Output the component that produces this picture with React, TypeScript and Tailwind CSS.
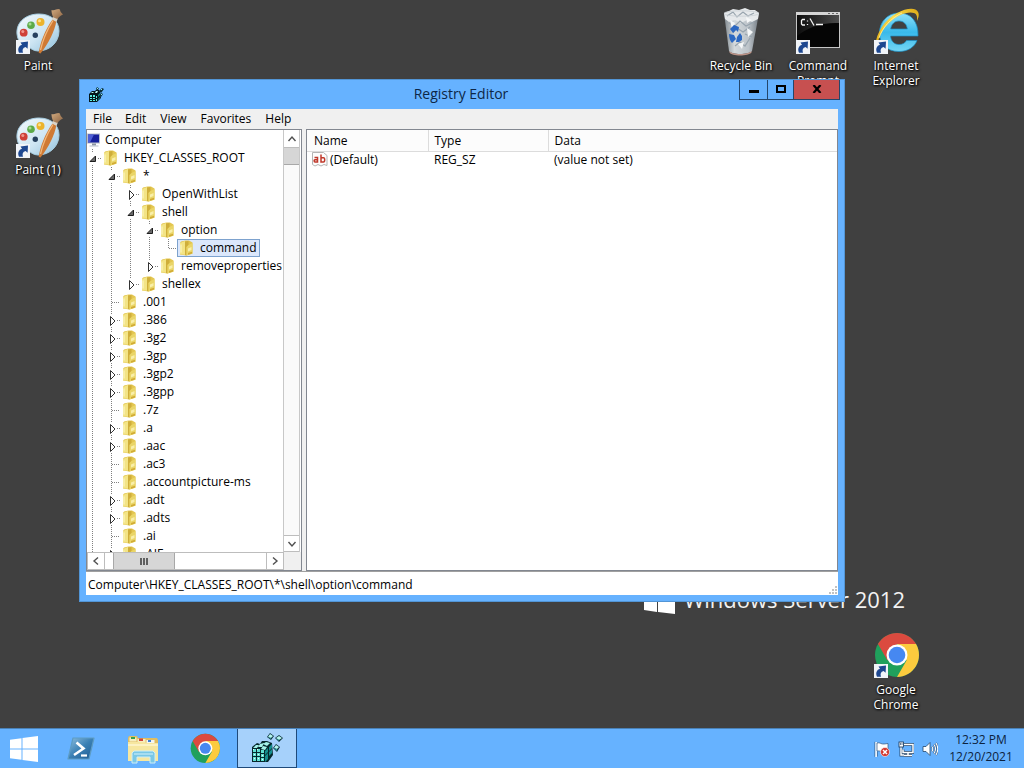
import type { ReactNode } from "react";

/* ---------- Desktop icons ---------- */

function ShortcutBadge() {
  return (
    <g>
      <rect x="2" y="32" width="14" height="14" fill="#f1f4f8" />
      <path d="M5 44.800c-1.800-4-.2-7 3-8L6.500 34.600l7.500-1-.4 7.200-2-1.700c-2.800.6-3.600 2.700-2.600 5.700z" fill="#1d4790" />
    </g>
  );
}

function PaintIcon() {
  return (
    <svg viewBox="0 0 48 48" className="size-12 overflow-visible" aria-hidden="true">
      <defs>
        <linearGradient id="palette" x1="0" y1="0" x2="1" y2="1">
          <stop offset="0" stopColor="#f2f9fd" />
          <stop offset="0.55" stopColor="#cfe6f3" />
          <stop offset="1" stopColor="#8fc0dc" />
        </linearGradient>
        <linearGradient id="bristle" x1="0" y1="0" x2="1" y2="1">
          <stop offset="0" stopColor="#d3ab80" />
          <stop offset="1" stopColor="#8a6241" />
        </linearGradient>
      </defs>
      <path d="M3 26C2 14 12 6 25 6c12 0 20 7 20 17 0 11-9 20-21 20-5 0-7-3-10-4C8 38 4 34 3 26z" fill="url(#palette)" stroke="#a5cce0" strokeWidth="1" />
      <circle cx="9.700" cy="24.700" r="3.900" fill="#cf4038" />
      <circle cx="8.800" cy="23.500" r="1.500" fill="#f0958d" />
      <circle cx="17" cy="17.300" r="3.800" fill="#5cab49" />
      <circle cx="16" cy="16" r="1.500" fill="#a7dc94" />
      <circle cx="26.500" cy="14" r="4" fill="#ecb32c" />
      <circle cx="25.500" cy="12.700" r="1.500" fill="#fbe291" />
      <circle cx="21.300" cy="27.300" r="2.700" fill="#26405e" />
      <path d="M38.500 11.500l3.800 1.800C41 22 35 35 26.500 45.500l-1.800-.8C26 35 31 22 38.500 11.500z" fill="#cf7a34" />
      <path d="M39 12.500C33 22 28.500 33 26.500 42" fill="none" stroke="#f3b87b" strokeWidth="1.300" />
      <path d="M37.500 11l2.500-3 4 2-1.500 4z" fill="#d9d3c8" />
      <path d="M39.500 9.500c-1.500-2.500-2-5-2-7.500 2 .8 3 0 4.500-.5s2.500-1 4 0c0 2 1.500 3.500 3 5-2 .8-4 2.500-5.500 4.500z" fill="url(#bristle)" />
      <ShortcutBadge />
    </svg>
  );
}

function RecycleBinIcon() {
  return (
    <svg viewBox="0 0 48 48" className="size-12 overflow-visible" aria-hidden="true">
      <defs>
        <linearGradient id="bin" x1="0" y1="0" x2="1" y2="0">
          <stop offset="0" stopColor="#7d868d" />
          <stop offset="0.3" stopColor="#d5dadd" />
          <stop offset="0.7" stopColor="#bcc3c9" />
          <stop offset="1" stopColor="#737b82" />
        </linearGradient>
      </defs>
      <path d="M7 5l5 38c2 4 20 4 23 0L42 5z" fill="url(#bin)" />
      <path d="M7 5l5-2 4-2 6 1 6-2 5 2 5 0 4 3-1 6-6 3-5-2-6 3-6-3-6 2-4-3z" fill="#e6e9eb" />
      <path d="M10 8l6-4 4 5 6-5 5 4 6-3M12 15l6 3 5-5 6 5 8-4M16 25l4-5 6 4 7-5M18 38l5-4 5 4 5-8M28 26l7 3" fill="none" stroke="#98a4ae" strokeWidth="1.200" />
      <path d="M13 12l5 3-3 6zM30 20l6 4-5 5zM21 36l6-2-2 7zM29 9l6 3-5 3z" fill="#f5f7f8" />
      <path d="M13 21l4-4 5 2-1 5-2-2-3 3zM12 26l5 1 2 4-4 4c-2-2-3-5-3-9zM19 34l1-5 3-4 2 3 0 4-3 2z" fill="#2c68c2" />
      <path d="M12.500 43c2 4 19 4 22 0v1.500c-3 4-20 4-22 0z" fill="#bf968a" />
      <ellipse cx="24.500" cy="5.500" rx="17.500" ry="2.700" fill="none" stroke="#cfd5d9" />
    </svg>
  );
}

function CommandPromptIcon() {
  return (
    <svg viewBox="0 0 48 48" className="size-12 overflow-visible" aria-hidden="true">
      <defs>
        <linearGradient id="console" x1="0" y1="0" x2="1" y2="0">
          <stop offset="0" stopColor="#0c0c0c" />
          <stop offset="1" stopColor="#4c4c4c" />
        </linearGradient>
      </defs>
      <rect x="2.500" y="4.500" width="43" height="35" fill="#050505" stroke="#c6c6c6" />
      <rect x="2" y="4" width="44" height="3" fill="#d5d5d5" />
      <path d="M34 5.500h2M38 5.500h2M42 5.500h2" stroke="#6a6a6a" />
      <path d="M3 7h42v8C28 14 12 20 3 28z" fill="url(#console)" />
      <path d="M11 11.500H8.500l-1 1v3.500l1 1H11M13.500 12.500v1M13.500 16v1M16 10.500l4 7M22 16.500h7" fill="none" stroke="#f4f4f4" strokeWidth="1.300" />
      <ShortcutBadge />
    </svg>
  );
}

function InternetExplorerIcon() {
  return (
    <svg viewBox="0 0 48 48" className="size-12 overflow-visible" aria-hidden="true">
      <defs>
        <linearGradient id="ie-e" x1="0" y1="0" x2="0" y2="1">
          <stop offset="0" stopColor="#8fe0f8" />
          <stop offset="0.5" stopColor="#39b9ea" />
          <stop offset="1" stopColor="#74d6f5" />
        </linearGradient>
        <linearGradient id="ie-ring" x1="0" y1="1" x2="1" y2="0">
          <stop offset="0" stopColor="#e1a90f" />
          <stop offset="0.6" stopColor="#fbdc4c" />
          <stop offset="1" stopColor="#dba713" />
        </linearGradient>
      </defs>
      <path d="M46 28H18.500c.5 5.500 4 8.500 8.500 8.500 3.500 0 6-1.500 7.500-4h10.500C42.500 39 36 43.500 27 43.500 15 43.500 7.500 36 7.500 25S15.500 5 27 5s19.500 8 19 23zM18.700 21h16.600c-.5-5-3.800-8-8.300-8s-7.600 3-8.300 8z" fill="url(#ie-e)" stroke="#1d8fc6" strokeWidth="0.700" />
      <path d="M3.500 37C4 26 12 12 25 5 35-.5 45-1 46.500 5c.6 2.500 0 5-1.500 8 .5-4 0-7-3-8C36 3 25 7 17 15 11 21 6 29 5.500 38z" fill="url(#ie-ring)" />
      <path d="M7 30C10 20 19 10 30 5" fill="none" stroke="#fff0a0" strokeWidth="0.900" />
      <ShortcutBadge />
    </svg>
  );
}

function ChromeMark({ badge = false, className }: { badge?: boolean; className: string }) {
  return (
    <svg viewBox={badge ? "0 0 48 48" : "2 0 48 48"} className={className} aria-hidden="true">
      <g transform="translate(25 23)">
        <circle r="22" fill="#20a05c" />
        <path d="M-19.050-11A22 22 0 0 1 19.050-11L0-11-9.530 5.500z" fill="#db4a3f" />
        <path d="M19.050-11A22 22 0 0 1 0 22L9.530 5.500 0-11z" fill="#fccb3e" />
        <circle r="10.500" fill="#fff" />
        <circle r="8.300" fill="#4688f1" />
      </g>
      {badge && <ShortcutBadge />}
    </svg>
  );
}

function DesktopItem({ place, icon, lines }: { place: string; icon: ReactNode; lines: string[] }) {
  return (
    <button type="button" className={`absolute flex w-[76px] flex-col items-center ${place}`}>
      {icon}
      <span className="mt-0.5 text-[12px] leading-[15px] whitespace-nowrap text-white [text-shadow:1px_1px_2px_#000,0_0_3px_#000]">
        {lines.map((line) => (
          <span key={line} className="block">
            {line}
          </span>
        ))}
      </span>
    </button>
  );
}

/* ---------- Shared glyphs ---------- */

function RegistryCubes({ className }: { className: string }) {
  return (
    <svg viewBox="0 0 32 32" className={className} aria-hidden="true">
      <path d="M1 15l5-4 3 1 2-3 5 0 5 2 1 12-5 7H1z" fill="#06282c" />
      <path d="M2 17h3v3H2zM6 17h3v3H6zM10 18h3v3h-3zM2 21h3v3H2zM6 21h3v3H6zM10 22h3v3h-3zM2 25h3v4H2zM6 25h3v4H6zM10 26h3v3h-3z" fill="#5fe0d2" />
      <path d="M2 17h1v1H2zM6 17h1v1H6zM3 22h1v1H3zM7 22h1v1H7zM3 26h1v1H3zM7 26h1v1H7zM11 23h1v1h-1zM11 27h1v1h-1z" fill="#e9fffb" />
      <path d="M2 16l3-3h3l-2 3zM7 15l2-3 4-1-2 4zM12 12l3-2 4 1-3 3zM10 17l2-3 4 1-2 3z" fill="#a5f3ea" />
      <path d="M14 19l3-3v4l-3 3zM18 15l3-3v4l-3 3zM14 24l3-3v4l-3 3zM18 20l3-3v4l-3 3zM14 28l3-3v2l-3 3z" fill="#158f8f" />
      <path d="M19 1l4 3-3 4-4-3zM28 3l4 3-4 4-4-4zM25 12l4 3-3 5-4-4z" fill="#0a2f3a" />
      <path d="M19 2l3 2-2 2-3-1zM28 4l3 2-3 2-3-2zM25 13l3 2-2 2-3-1z" fill="#b5f6f0" />
      <path d="M17 5l3 1v1zM25 6l3 2v1zM23 16l3 1v2z" fill="#27a6a8" />
    </svg>
  );
}

function SmallRegistryCubes() {
  return (
    <svg viewBox="0 0 16 16" className="ml-0.5 size-4" aria-hidden="true">
      <path d="M1 7l3-3h3l1-1h3l1 2 1 6-4 4H1z" fill="#04181c" />
      <path d="M2 8h2v2H2zM5 8h2v2H5zM2 11h2v1H2zM5 11h2v1H5zM2 13h2v1H2zM5 13h2v1H5zM8 9h1v2H8zM8 12h1v2H8z" fill="#5ff0e2" />
      <path d="M3 6l1-1h2L5 6zM7 6l1-2h2L9 6z" fill="#baf8f2" />
      <path d="M10 8l2-2v2l-2 2zM10 12l2-2v1l-2 2z" fill="#149090" />
      <path d="M9 0l2 1.500L9.500 4 8 2zM14 1l2 1-3 4-2-2zM13 6l2 1-2 3-1-2z" fill="#0a2f3a" />
      <path d="M9 1h1v1H9zM13 2h1v1h-1zM13 7h1v1h-1z" fill="#8ce9e4" />
    </svg>
  );
}

function FolderIcon() {
  return (
    <svg viewBox="0 0 16 16" className="size-4 shrink-0" aria-hidden="true">
      <path d="M2 3l1-1.500L7.500.5H11l3.500 2v11l-6 2-6.500-1z" fill="#e3c650" />
      <path d="M2 3L7 1v13.800l-5-.6z" fill="#f3e486" />
      <path d="M3 4.500v8" stroke="#fbf5c0" strokeWidth="1.200" />
      <path d="M7 1.500l3.500-.5v4l-2 2v8.500L7 15z" fill="#cfae3a" />
      <path d="M8.500 7l2-2 4-2v10.800l-6 1.700z" fill="#ead567" />
      <path d="M10 8.500L13.500 7v3L10 11.500z" fill="#f9efaa" />
      <path d="M10 13l4-1.200v1.700l-4 1.200z" fill="#d1ab36" />
    </svg>
  );
}

function ComputerIcon() {
  return (
    <svg viewBox="0 0 16 16" className="size-4 shrink-0" aria-hidden="true">
      <rect x="0" y="1.500" width="13" height="10" fill="#b9c0cc" />
      <rect x="1" y="2.500" width="11" height="8" fill="#17219c" />
      <path d="M1 2.500h6L3 10.500H1z" fill="#4e5ed6" />
      <path d="M5 11.500h4v2H5z" fill="#8c95a3" />
      <path d="M2.500 13.500h9v1h-9z" fill="#b5bcc8" />
    </svg>
  );
}

function Chevron({ d }: { d: string }) {
  return (
    <svg viewBox="0 0 10 10" className="size-2.5" aria-hidden="true">
      <path d={d} fill="none" stroke="#505050" strokeWidth="1.400" />
    </svg>
  );
}

/* ---------- Registry tree ---------- */

type Twist = "open" | "closed" | "none";
type Key = { name: string; twist: Twist; guides: boolean[]; last?: boolean; selected?: boolean };

const top: boolean[] = [true];

const keys: Key[] = [
  { name: "HKEY_CLASSES_ROOT", twist: "open", guides: [] },
  { name: "*", twist: "open", guides: top },
  { name: "OpenWithList", twist: "closed", guides: [true, true] },
  { name: "shell", twist: "open", guides: [true, true] },
  { name: "option", twist: "open", guides: [true, true, true] },
  { name: "command", twist: "none", guides: [true, true, true, true], last: true, selected: true },
  { name: "removeproperties", twist: "closed", guides: [true, true, true], last: true },
  { name: "shellex", twist: "closed", guides: [true, true], last: true },
  { name: ".001", twist: "none", guides: top },
  { name: ".386", twist: "closed", guides: top },
  { name: ".3g2", twist: "closed", guides: top },
  { name: ".3gp", twist: "closed", guides: top },
  { name: ".3gp2", twist: "closed", guides: top },
  { name: ".3gpp", twist: "closed", guides: top },
  { name: ".7z", twist: "none", guides: top },
  { name: ".a", twist: "closed", guides: top },
  { name: ".aac", twist: "closed", guides: top },
  { name: ".ac3", twist: "none", guides: top },
  { name: ".accountpicture-ms", twist: "none", guides: top },
  { name: ".adt", twist: "closed", guides: top },
  { name: ".adts", twist: "closed", guides: top },
  { name: ".ai", twist: "none", guides: top },
  { name: ".AIF", twist: "closed", guides: top },
];

function Guide({ visible }: { visible: boolean }) {
  return (
    <svg viewBox="0 0 19 18" className="h-[18px] w-[19px] shrink-0" shapeRendering="crispEdges" aria-hidden="true">
      {visible && <path d="M5.500 0v18" stroke="#808080" strokeDasharray="1 1" />}
    </svg>
  );
}

function Joint({ twist, last }: { twist: Twist; last?: boolean }) {
  return (
    <svg viewBox="0 0 14 18" className="h-[18px] w-[14px] shrink-0" aria-hidden="true">
      <g stroke="#808080" strokeDasharray="1 1" shapeRendering="crispEdges">
        {twist === "none" ? (
          <path d={last ? "M5.500 0v10" : "M5.500 0v18"} />
        ) : (
          <path d={last ? "M5.500 0v4" : "M5.500 0v4M5.500 16v2"} />
        )}
        <path d={twist === "none" ? "M6 9.500h8" : "M11 9.500h3"} />
      </g>
      {twist === "open" && <path d="M8.500 7v5.500H3z" fill="#6a6a6a" stroke="#1e1e1e" />}
      {twist === "closed" && <path d="M4.500 5.500v9L9 10z" fill="#fff" stroke="#333" />}
    </svg>
  );
}

function TreeRow({ item }: { item: Key }) {
  return (
    <li role="treeitem" aria-selected={item.selected ?? false} className="flex h-[18px]">
      {item.guides.map((visible, i) => (
        <Guide key={i} visible={visible} />
      ))}
      <Joint twist={item.twist} last={item.last} />
      <button
        type="button"
        className={`flex h-[18px] items-center gap-1.5 border pr-0.5 leading-4 whitespace-nowrap ${
          item.selected ? "border-[#7da2ce] bg-[#dbe7fb]" : "border-transparent"
        }`}
      >
        <FolderIcon />
        {item.name}
      </button>
    </li>
  );
}

function RegistryTree() {
  return (
    <section aria-label="Registry keys" className="flex w-[216px] shrink-0 flex-col border border-[#828790] bg-white">
      <div className="flex min-h-0 flex-1">
        <ul role="tree" className="min-w-0 flex-1 overflow-hidden pt-px">
          <li role="treeitem" aria-selected={false} className="flex h-[18px]">
            <button type="button" className="flex items-center gap-0.5 leading-4">
              <ComputerIcon />
              Computer
            </button>
          </li>
          {keys.map((item) => (
            <TreeRow key={item.name} item={item} />
          ))}
        </ul>
        <div className="mr-px flex w-[17px] shrink-0 flex-col border-x border-[#c8c8c8] bg-[#fafafa]">
          <button type="button" aria-label="Scroll up" className="flex h-[18px] items-center justify-center border-b border-[#bdbdbd] bg-white">
            <Chevron d="M1.500 7L5 3l3.500 4" />
          </button>
          <div className="h-[17px] border-b border-[#a8a8a8] bg-[#d6d6d6]" />
          <div className="flex-1" />
          <button type="button" aria-label="Scroll down" className="flex h-[17px] items-center justify-center border-y border-[#bdbdbd] bg-white">
            <Chevron d="M1.500 3L5 7l3.500-4" />
          </button>
        </div>
      </div>
      <div className="flex h-[18px] shrink-0 bg-[#f0f0f0]">
        <div className="flex flex-1 border border-[#bdbdbd] bg-white">
          <button type="button" aria-label="Scroll left" className="flex w-[17px] items-center justify-center border-r border-[#bdbdbd]">
            <Chevron d="M7 1.500L3 5l4 3.500" />
          </button>
          <div className="ml-2 flex w-[62px] items-center justify-center gap-px border-x border-[#a8a8a8] bg-[#d6d6d6]">
            <span className="h-[7px] w-0.5 bg-[#606060]" />
            <span className="h-[7px] w-0.5 bg-[#606060]" />
            <span className="h-[7px] w-0.5 bg-[#606060]" />
          </div>
          <div className="flex-1" />
          <button type="button" aria-label="Scroll right" className="flex w-[17px] items-center justify-center border-l border-[#bdbdbd]">
            <Chevron d="M3 1.500L7 5 3 8.500" />
          </button>
        </div>
        <div className="w-[17px]" />
      </div>
    </section>
  );
}

/* ---------- Value list ---------- */

function StringValueIcon() {
  return (
    <svg viewBox="0 0 16 16" className="size-4 shrink-0" aria-hidden="true">
      <path d="M.5.500h11l3.500 3v10l-3-1-3 1.500-3-1.500-3 1.500-2.500-1.500z" fill="#fdfdfd" stroke="#b4b4b4" />
      <path d="M2.500 5.500h3v4.500h-2.500c-1.200 0-1.200-2.300 0-2.300h2.500M9 2.500v7.500h2.500c1.600 0 1.600-4.300 0-4.300h-2.500" fill="none" stroke="#c0392b" strokeWidth="1.500" />
    </svg>
  );
}

function ValueList() {
  return (
    <section aria-label="Values" className="min-w-0 flex-1 border border-[#828790] bg-white">
      <table className="w-full table-fixed border-collapse text-left">
        <thead>
          <tr className="h-[21px] border-b border-[#dcdcdc] bg-[#fcfcfc]">
            <th className="w-[121px] border-r border-[#dcdcdc] pt-0.5 pl-[7px] font-normal">Name</th>
            <th className="w-[120px] border-r border-[#dcdcdc] pt-0.5 pl-[6px] font-normal">Type</th>
            <th className="pt-0.5 pl-[6px] font-normal">Data</th>
          </tr>
        </thead>
        <tbody>
          <tr className="h-[18px]">
            <td className="pl-[5px]">
              <span className="flex items-center gap-0.5">
                <StringValueIcon />
                (Default)
              </span>
            </td>
            <td className="pl-[6px]">REG_SZ</td>
            <td className="pl-[6px]">(value not set)</td>
          </tr>
        </tbody>
      </table>
    </section>
  );
}

/* ---------- Window ---------- */

function RegistryWindow() {
  return (
    <main className="absolute top-[79px] left-[79px] flex h-[523px] w-[766px] flex-col border border-[#5295d6] bg-[#66b2ff] px-1.5 pb-1.5 text-[12px] leading-4 text-black">
      <header className="flex h-[29px] shrink-0">
        <div className="flex w-[97px] items-center">
          <SmallRegistryCubes />
        </div>
        <h1 className="flex flex-1 items-center justify-center pb-0.5 text-[14px] text-[#0d2746]">Registry Editor</h1>
        <div className="-mr-0.5 flex h-5 border-x border-b border-[#24466b]">
          <button type="button" aria-label="Minimize" className="flex w-7 justify-center border-r border-[#24466b] pt-2.5">
            <span className="h-[3px] w-2.5 bg-black" />
          </button>
          <button type="button" aria-label="Maximize" className="flex w-[26px] justify-center border-r border-[#24466b] pt-[5px]">
            <span className="h-2 w-2.5 border-2 border-black" />
          </button>
          <button type="button" aria-label="Close" className="flex w-[45px] justify-center bg-[#c75050] pt-[5px]">
            <svg viewBox="0 0 10 8" className="h-2 w-2.5" aria-hidden="true">
              <path d="M1.500 0l7 8M8.500 0l-7 8" stroke="#000" strokeWidth="2.200" />
            </svg>
          </button>
        </div>
      </header>
      <nav aria-label="Menu bar" className="flex h-5 shrink-0 items-center bg-[#f0f0f0]">
        {["File", "Edit", "View", "Favorites", "Help"].map((label) => (
          <button key={label} type="button" className="px-[7px] first:pr-1.5">
            {label}
          </button>
        ))}
      </nav>
      <div className="flex min-h-0 flex-1 gap-1 bg-[#f0f0f0]">
        <RegistryTree />
        <ValueList />
      </div>
      <footer className="flex h-6 shrink-0 items-center justify-between border-t border-[#a0a0a0] bg-white pt-0.5 pl-0.5">
        <span>Computer\HKEY_CLASSES_ROOT\*\shell\option\command</span>
        <svg viewBox="0 0 10 10" className="size-2.5 self-end" aria-hidden="true">
          <path d="M7 1h2v2H7zM7 4h2v2H7zM4 4h2v2H4zM7 7h2v2H7zM4 7h2v2H4zM1 7h2v2H1z" fill="#c2c2c2" />
        </svg>
      </footer>
    </main>
  );
}

/* ---------- Taskbar ---------- */

function PowerShellIcon() {
  return (
    <svg viewBox="0 0 32 26" className="h-[26px] w-8" aria-hidden="true">
      <defs>
        <linearGradient id="shell" x1="0" y1="0" x2="1" y2="1">
          <stop offset="0" stopColor="#8fc0e0" />
          <stop offset="0.5" stopColor="#3a80b4" />
          <stop offset="1" stopColor="#1f5a90" />
        </linearGradient>
      </defs>
      <path d="M9 2h21l-5 21H4z" fill="url(#shell)" stroke="#5d9cc4" strokeWidth="1.200" strokeLinejoin="round" />
      <path d="M12.500 6.500l7 6-9.500 6.500" fill="none" stroke="#fff" strokeWidth="2.600" />
      <path d="M17 19.500h6" stroke="#fff" strokeWidth="2.200" />
    </svg>
  );
}

function ExplorerIcon() {
  return (
    <svg viewBox="0 0 32 30" className="h-[30px] w-8" aria-hidden="true">
      <path d="M1 4l1-2h8l1 2h19l1 2v21H1z" fill="#dfbd62" />
      <path d="M2.500 3.500h7v4h-7z" fill="#f6eec0" />
      <path d="M4 3h4v2H4z" fill="#35a04c" />
      <path d="M10.500 5h8v3h-8z" fill="#f6eec0" />
      <path d="M12 4.500h4v2.500h-4z" fill="#d3453a" />
      <path d="M19.500 6h8v3h-8z" fill="#f6f6f0" />
      <path d="M21 6h3v2h-3z" fill="#3f81d4" />
      <path d="M1 8h17l2 1h11v18H1z" fill="#f6e7a0" />
      <path d="M1 10h30v2H1z" fill="#fcf2c4" />
      <path d="M5 29V19l2-2h19l2 2v10h-5v-6H10v6z" fill="#7ac8e6" stroke="#cdeef8" />
      <path d="M7 20h19" stroke="#b7e4f5" strokeWidth="1.500" />
    </svg>
  );
}

function FlagIcon() {
  return (
    <svg viewBox="0 0 16 16" className="size-4" aria-hidden="true">
      <path d="M2 1v15" stroke="#f8fbff" strokeWidth="1.800" />
      <path d="M.8.8v15M3.500 10.500v5" stroke="#31557c" strokeWidth="0.600" />
      <path d="M3 2c3-1 4 1.500 7 1l4-.5v8l-4 .5c-3 0-4-1.500-7-1z" fill="#fff" stroke="#31557c" strokeWidth="0.700" />
      <circle cx="11" cy="11" r="4.500" fill="#d3352c" stroke="#fff" strokeWidth="0.600" />
      <path d="M9 9l4 4M13 9l-4 4" stroke="#fff" strokeWidth="1.500" />
    </svg>
  );
}

function NetworkIcon() {
  return (
    <svg viewBox="0 0 16 16" className="size-4" aria-hidden="true">
      <path d="M6 3.500h9v8H5v-3M10 11.500v3M6 14.500h8M3 6v8h3" fill="none" stroke="#24466b" strokeWidth="2.900" />
      <path d="M6 3.500h9v8H5v-3M10 11.500v3M6 14.500h8M3 6v8h3" fill="none" stroke="#fff" strokeWidth="1.500" />
      <rect x="1" y="1" width="4.500" height="5" fill="#fff" stroke="#24466b" strokeWidth="0.900" />
      <path d="M2.500 2v2M4 2v2" stroke="#24466b" strokeWidth="0.700" />
    </svg>
  );
}

function SpeakerIcon() {
  return (
    <svg viewBox="0 0 16 16" className="size-4" aria-hidden="true">
      <path d="M1 5.500h3l4-4v13l-4-4H1z" fill="#fff" stroke="#24466b" strokeWidth="0.800" />
      <path d="M10 5.500q1.500 2.500 0 5M12 3.500q3 4.500 0 9M14 2q3.500 6 0 12" fill="none" stroke="#24466b" strokeWidth="1.800" />
      <path d="M10 5.500q1.500 2.500 0 5M12 3.500q3 4.500 0 9M14 2q3.500 6 0 12" fill="none" stroke="#fff" strokeWidth="1.100" />
    </svg>
  );
}

function Taskbar() {
  return (
    <footer className="flex h-10 shrink-0 items-stretch justify-between border-t border-[#4a82b8] bg-[#66b2ff]">
      <div className="flex">
        <button type="button" aria-label="Start" className="flex w-12 items-center justify-center">
          <svg viewBox="0 0 28 26" className="h-[26px] w-7" aria-hidden="true">
            <path d="M0 3.800L11.500 2.200v10.300H0zM12.500 2L28 0v12.500H12.500zM0 13.500h11.500v10.300L0 22.200zM12.500 13.500H28V26l-15.500-2z" fill="#fff" />
          </svg>
        </button>
        <button type="button" aria-label="Windows PowerShell" className="flex w-16 items-center justify-center">
          <PowerShellIcon />
        </button>
        <button type="button" aria-label="File Explorer" className="flex w-[62px] items-center justify-center">
          <ExplorerIcon />
        </button>
        <button type="button" aria-label="Google Chrome" className="flex w-[63px] items-center justify-center">
          <ChromeMark className="size-8" />
        </button>
        <button type="button" aria-label="Registry Editor" className="flex w-[60px] items-center justify-center border border-t-0 border-[#1f4a7a] bg-[#a6d1fb]">
          <RegistryCubes className="size-8" />
        </button>
      </div>
      <div className="flex items-center text-[12px] text-[#0c2340]">
        <div className="flex items-center gap-2">
          <FlagIcon />
          <NetworkIcon />
          <SpeakerIcon />
        </div>
        <time className="w-[86px] pb-0.5 text-center leading-[17px]">
          <span className="block">12:32 PM</span>
          <span className="block">12/20/2021</span>
        </time>
      </div>
    </footer>
  );
}

/* ---------- Desktop ---------- */

export default function App() {
  return (
    <div className="flex min-h-screen flex-col bg-[#404040] font-['Open_Sans','Noto_Sans',sans-serif]">
      <div className="relative flex-1 overflow-hidden">
        <DesktopItem place="top-2 left-0" icon={<PaintIcon />} lines={["Paint"]} />
        <DesktopItem place="top-28 left-0" icon={<PaintIcon />} lines={["Paint (1)"]} />
        <DesktopItem place="top-2 right-[245px]" icon={<RecycleBinIcon />} lines={["Recycle Bin"]} />
        <DesktopItem place="top-2 right-[168px]" icon={<CommandPromptIcon />} lines={["Command", "Prompt"]} />
        <DesktopItem place="top-2 right-[90px]" icon={<InternetExplorerIcon />} lines={["Internet", "Explorer"]} />
        <DesktopItem
          place="right-[90px] bottom-4"
          icon={<ChromeMark badge className="size-12 overflow-visible" />}
          lines={["Google", "Chrome"]}
        />
        <div className="absolute right-[119px] bottom-[113px] flex items-center gap-2 text-[#f2f2f2]">
          <svg viewBox="0 0 32 32" className="size-8" aria-hidden="true">
            <path d="M0 4l13-2v13H0zM14 2l17-2v15H14zM0 16h13v13L0 27zM14 16h17v15l-17-2z" fill="#fff" />
          </svg>
          <p className="text-[22px] leading-8">Windows Server 2012</p>
        </div>
        <RegistryWindow />
      </div>
      <Taskbar />
    </div>
  );
}
